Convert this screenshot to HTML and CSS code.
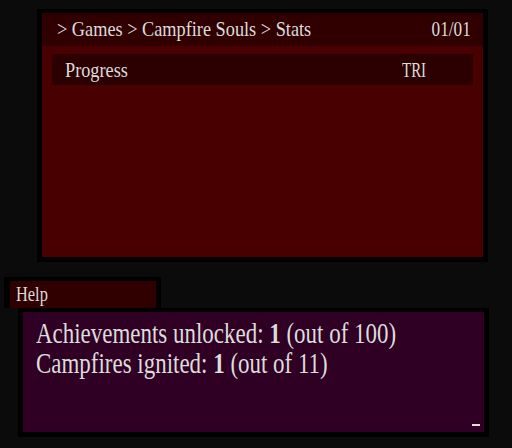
FILE: index.html
```html
<!DOCTYPE html>
<html lang="en">
<head>
  <meta charset="UTF-8" />
  <title>Campfire Souls - Stats</title>
  <link rel="stylesheet" href="styles.css">
</head>
<body>
  <div class="window">
    <div class="crumbs">
      <span class="txt">&gt; Games &gt; Campfire Souls &gt; Stats</span>
      <span class="txt page">01/01</span>
    </div>
    <div class="row">
      <span class="txt">Progress</span>
      <span class="txt val">TRI</span>
    </div>
  </div>

  <div class="tab">
    <span class="txt">Help</span>
  </div>
  <div class="help">
    <p class="line"><span class="txt">Achievements unlocked: <b>1</b> (out of 100)</span></p>
    <p class="line"><span class="txt">Campfires ignited: <b>1</b> (out of 11)</span></p>
    <div class="cursor"></div>
  </div>
</body>
</html>
```

FILE: styles.css
```css
* {
  margin: 0;
  padding: 0;
  box-sizing: border-box;
}

body {
  background: #0b0b0b;
  width: 512px;
  height: 448px;
  overflow: hidden;
  font-family: "Liberation Serif", serif;
  color: #dcdcdc;
}

.txt {
  display: inline-block;
  transform-origin: left center;
  white-space: nowrap;
}

.window {
  margin: 9px 0 0 37px;
  width: 451px;
  height: 253px;
  background: #480000;
  border: 5px solid #000;
  border-top-width: 4px;
}

.crumbs {
  height: 33px;
  background: #300000;
  display: flex;
  justify-content: space-between;
  align-items: center;
  padding: 0 12px 0 15px;
  font-size: 21px;
}

.crumbs .txt {
  transform: scaleX(0.87);
}

.crumbs .page {
  transform: scaleX(0.82);
  transform-origin: right center;
}

.row {
  height: 31px;
  margin: 8px 10px 0;
  background: #2c0000;
  display: flex;
  align-items: center;
  padding-left: 13px;
  font-size: 22px;
}

.row .txt {
  transform: scaleX(0.83);
}

.row .val {
  margin-left: 261px;
  transform: scaleX(0.68);
}

.tab {
  margin: 15px 0 0 4px;
  width: 157px;
  height: 31px;
  background: #300000;
  border: 4px solid #000;
  border-left-width: 6px;
  border-right-width: 5px;
  border-bottom: none;
  padding-left: 6px;
  font-size: 21px;
  display: flex;
  align-items: center;
}

.tab .txt {
  transform: scaleX(0.78);
}

.help {
  margin-left: 18px;
  width: 471px;
  height: 129px;
  background: #300024;
  border: 5px solid #000;
  border-top-width: 4px;
  padding: 6px 13px 6px;
  display: flex;
  flex-direction: column;
  font-size: 30px;
}

.line {
  height: 30px;
  line-height: 30px;
}

.line .txt {
  transform: scaleX(0.765);
}

.cursor {
  margin-top: auto;
  align-self: flex-end;
  width: 8px;
  height: 2px;
  background: #dcdcdc;
  margin-right: -9px;
}
```
